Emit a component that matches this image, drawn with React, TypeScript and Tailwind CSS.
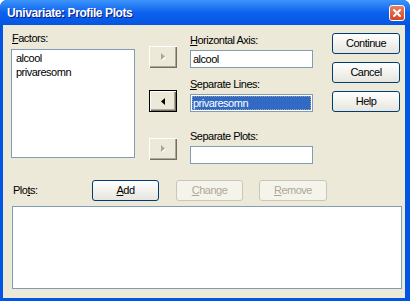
import React from "react";

const font = { fontFamily: '"Liberation Sans", Arial, sans-serif' };

function U({ children }: { children: React.ReactNode }) {
  return <span className="underline underline-offset-[1px]">{children}</span>;
}

function XPButton({ children, disabled }: { children: React.ReactNode; disabled?: boolean }) {
  return (
    <div
      className={
        disabled
          ? "h-[21px] flex items-center justify-center rounded-[3px] border border-[#C9C7BA] bg-[#F5F4EA] text-[#ACA899]"
          : "h-[21px] flex items-center justify-center rounded-[3px] border border-[#003C74] bg-gradient-to-b from-[#FFFFFF] to-[#E6E5DE] text-black"
      }
    >
      {children}
    </div>
  );
}

function ArrowBtn({ active }: { active?: boolean }) {
  return (
    <div
      className={
        active
          ? "w-[28px] h-[22px] border border-black bg-[#ECE9D8] flex items-center justify-center shadow-[inset_1px_1px_0_#fff,inset_-1px_-1px_0_#716F64,inset_-2px_-2px_0_#ACA899]"
          : "w-[28px] h-[22px] bg-[#ECE9D8] flex items-center justify-center shadow-[inset_1px_1px_0_#fff,inset_-1px_-1px_0_#716F64,inset_-2px_-2px_0_#ACA899]"
      }
    >
      {active ? (
        <svg width="4" height="7" viewBox="0 0 4 7">
          <path d="M4 0 L0 3.5 L4 7 Z" fill="#000" />
        </svg>
      ) : (
        <svg width="5" height="8" viewBox="0 0 5 8">
          <path d="M1 1 L5 4.5 L1 8 Z" fill="#fff" />
          <path d="M0 0 L4 3.5 L0 7 Z" fill="#ACA899" />
        </svg>
      )}
    </div>
  );
}

export default function App() {
  return (
    <div
      className="w-[410px] h-[301px] bg-[#0055E5] flex flex-col rounded-t-[7px] overflow-hidden text-[11px] tracking-[-0.5px] text-black"
      style={font}
    >
      {/* Title bar */}
      <div className="h-[25px] flex items-center pl-[7px] pr-[5px] bg-gradient-to-b from-[#3D93F8] via-[#0B62EE] to-[#0655E2]">
        <div className="flex-1 text-white font-bold text-[12px] tracking-[-0.4px] [text-shadow:1px_1px_0_#0A1883]">
          Univariate: Profile Plots
        </div>
        <div className="w-[16px] h-[16px] rounded-[3px] border border-white bg-gradient-to-b from-[#E8805F] to-[#D6431E] flex items-center justify-center">
          <svg width="8" height="8" viewBox="0 0 8 8">
            <path d="M1 1 L7 7 M7 1 L1 7" stroke="#fff" strokeWidth="2" strokeLinecap="square" />
          </svg>
        </div>
      </div>

      {/* Body */}
      <div className="flex-1 ml-[3px] mr-[5px] mb-[3px] bg-[#ECE9D8] flex flex-col">
        {/* Top area */}
        <div className="flex pt-[6px] pl-[8px]">
          {/* Factors */}
          <div className="w-[124px] flex flex-col">
            <div className="h-[14px] leading-[14px] pl-[1px]">
              <U>F</U>actors:
            </div>
            <div className="mt-[4px] h-[109px] bg-white border border-[#7F9DB9] pt-[1px] pl-[4px]">
              <div className="h-[14px] leading-[14px]">alcool</div>
              <div className="h-[14px] leading-[14px]">privaresomn</div>
            </div>
          </div>

          {/* Arrows */}
          <div className="ml-[14px] w-[28px] flex flex-col">
            <div className="mt-[15px]">
              <ArrowBtn />
            </div>
            <div className="mt-[22px]">
              <ArrowBtn active />
            </div>
            <div className="mt-[26px]">
              <ArrowBtn />
            </div>
          </div>

          {/* Inputs */}
          <div className="ml-[13px] w-[123px] flex flex-col">
            <div className="mt-[2px] h-[14px] leading-[14px]">
              <U>H</U>orizontal Axis:
            </div>
            <div className="mt-[3px] h-[18px] bg-white border border-[#7F9DB9] pl-[2px] leading-[16px]">alcool</div>
            <div className="mt-[9px] h-[14px] leading-[14px]">
              <U>S</U>eparate Lines:
            </div>
            <div className="mt-[3px] h-[18px] bg-white border border-[#7F9DB9] p-[1px]">
              <div className="h-full bg-[#316AC5] text-white pl-[1px] leading-[14px] outline outline-1 outline-dotted outline-[#9C9C9C] -outline-offset-1">
                privaresomn
              </div>
            </div>
            <div className="mt-[17px] h-[14px] leading-[14px]">Separate Plots:</div>
            <div className="mt-[3px] h-[18px] bg-white border border-[#7F9DB9]" />
          </div>

          {/* Buttons */}
          <div className="ml-[19px] w-[68px] flex flex-col">
            <div className="mt-[2px]">
              <XPButton>Continue</XPButton>
            </div>
            <div className="mt-[8px]">
              <XPButton>Cancel</XPButton>
            </div>
            <div className="mt-[8px]">
              <XPButton>Help</XPButton>
            </div>
          </div>
        </div>

        {/* Plots row */}
        <div className="flex items-center pl-[8px] mt-[16px]">
          <div className="w-[81px] pl-[2px]">
            Plo<U>t</U>s:
          </div>
          <div className="w-[67px]">
            <XPButton>
              <span>
                <U>A</U>dd
              </span>
            </XPButton>
          </div>
          <div className="w-[67px] ml-[17px]">
            <XPButton disabled>
              <span>
                <U>C</U>hange
              </span>
            </XPButton>
          </div>
          <div className="w-[68px] ml-[16px]">
            <XPButton disabled>
              <span>
                <U>R</U>emove
              </span>
            </XPButton>
          </div>
        </div>

        <div className="mt-[5px] ml-[9px] w-[390px] h-[83px] bg-white border border-[#7F9DB9]" />
      </div>
    </div>
  );
}
